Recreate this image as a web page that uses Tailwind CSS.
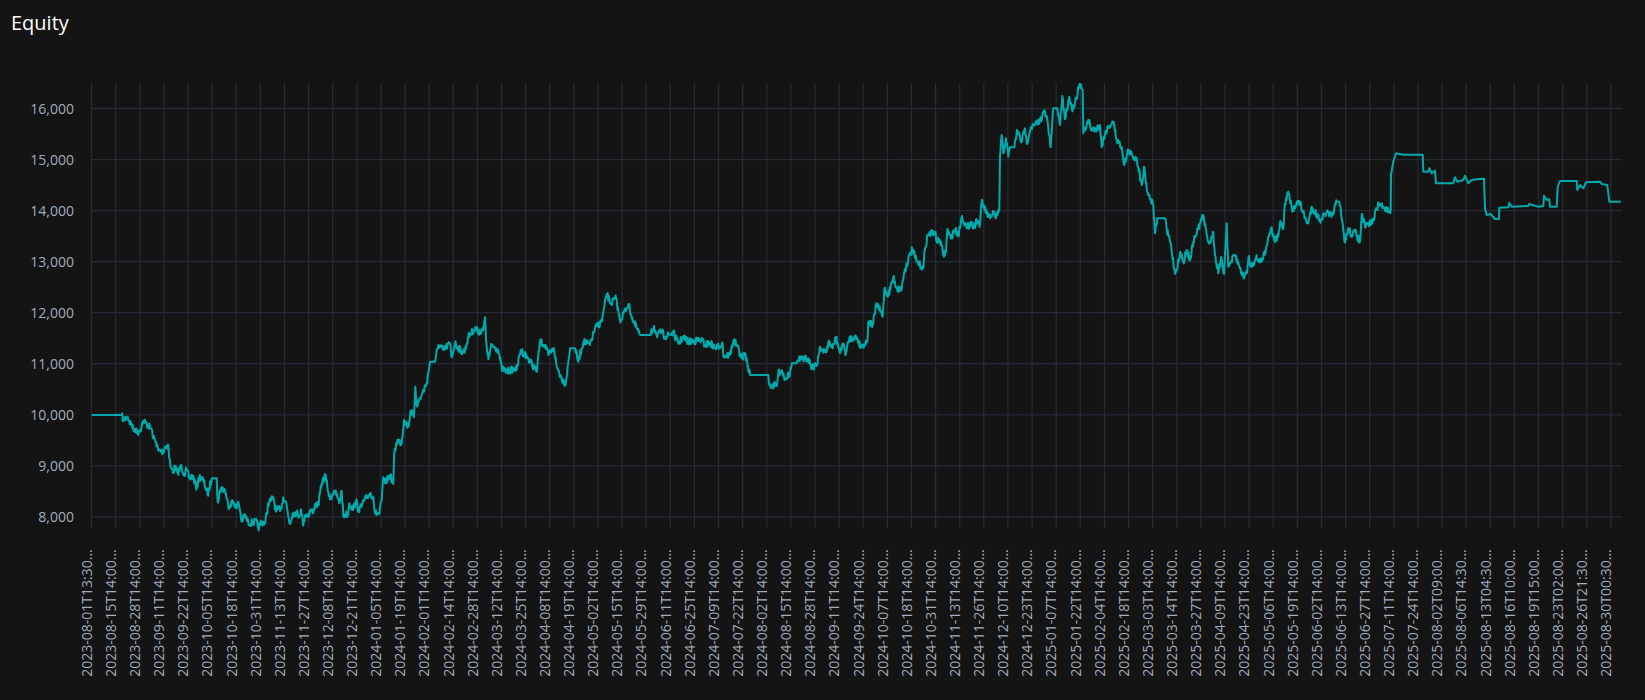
<!DOCTYPE html>
<html lang="en">
<head>
  <meta charset="UTF-8" />
  <title>Equity</title>
  <script src="https://cdn.jsdelivr.net/npm/@tailwindcss/browser@4"></script>
</head>
<body class="bg-[#141414] h-[700px] overflow-hidden font-['Open_Sans',sans-serif]">
  <h1 class="pt-[9px] pl-[11px] text-xl leading-7 font-normal text-white">Equity</h1>
  <svg class="block w-[1645px] h-[663px] text-[14px]" viewBox="0 37 1645 663">
    <g id="grid" class="stroke-[#262936]" stroke-width="1.3"></g>
    <g id="ylabels" class="fill-[#a2adbd]" text-anchor="end"></g>
    <g id="xlabels" class="fill-[#a2adbd]"></g>
    <path id="line" class="stroke-[#00aaaa]" fill="none" stroke-width="2" stroke-linejoin="round"></path>
  </svg>

  <script>
    const NS = 'http://www.w3.org/2000/svg';
    const ticks = ['2023-08-01T13:30','2023-08-15T14:00','2023-08-28T14:00','2023-09-11T14:00','2023-09-22T14:00','2023-10-05T14:00','2023-10-18T14:00','2023-10-31T14:00','2023-11-13T14:00','2023-11-27T14:00','2023-12-08T14:00','2023-12-21T14:00',
      '2024-01-05T14:00','2024-01-19T14:00','2024-02-01T14:00','2024-02-14T14:00','2024-02-28T14:00','2024-03-12T14:00','2024-03-25T14:00','2024-04-08T14:00','2024-04-19T14:00','2024-05-02T14:00','2024-05-15T14:00','2024-05-29T14:00','2024-06-11T14:00','2024-06-25T14:00','2024-07-09T14:00','2024-07-22T14:00','2024-08-02T14:00','2024-08-15T14:00','2024-08-28T14:00','2024-09-11T14:00','2024-09-24T14:00','2024-10-07T14:00','2024-10-18T14:00','2024-10-31T14:00','2024-11-13T14:00','2024-11-26T14:00','2024-12-10T14:00','2024-12-23T14:00',
      '2025-01-07T14:00','2025-01-22T14:00','2025-02-04T14:00','2025-02-18T14:00','2025-03-03T14:00','2025-03-14T14:00','2025-03-27T14:00','2025-04-09T14:00','2025-04-23T14:00','2025-05-06T14:00','2025-05-19T14:00','2025-06-02T14:00','2025-06-13T14:00','2025-06-27T14:00','2025-07-11T14:00','2025-07-24T14:00',
      '2025-08-02T09:00','2025-08-06T14:30','2025-08-13T04:30','2025-08-16T10:00','2025-08-19T15:00','2025-08-23T02:00','2025-08-26T21:30','2025-08-30T00:30'];
    const plotLeft = 91, plotRight = 1622, plotTop = 83, plotBottom = 528;

    function add(parent, tag, attrs, text) {
      const el = document.createElementNS(NS, tag);
      for (const k in attrs) el.setAttribute(k, attrs[k]);
      if (text) el.textContent = text;
      document.getElementById(parent).appendChild(el);
    }

    ticks.forEach((t, i) => {
      const x = 91.5 + i * 24.117;
      add('grid', 'line', { x1: x, x2: x, y1: plotTop, y2: plotBottom });
      add('xlabels', 'text', { transform: `translate(${x + 0.3},676.7) rotate(-90)` }, t + '...');
    });

    [16, 15, 14, 13, 12, 11, 10, 9, 8].forEach((v, i) => {
      const y = 108.5 + i * 51.05;
      add('grid', 'line', { x1: plotLeft, x2: plotRight, y1: y, y2: y });
      add('ylabels', 'text', { x: 74, y: y + 5 }, v + ',000');
    });

    // curve traced from the plot, a piece at a time: [originX, originY, x, y, x, y...] at 3x
    const pieces = [
      [90, 400, 5,45, 95,45, 100,60, 113,50, 118,65, 125,72, 130,90, 138,85, 140,100, 150,90, 155,78, 160,62, 170,72, 185,88, 190,115, 198,125, 205,152, 220,155, 225,140, 235,135, 238,175, 243,205, 250,215, 255,200, 262,218, 275,200, 282,222, 290,210, 298,235, 308,228, 320,265, 328,230, 340,240, 353,285, 365,235, 380,235, 383,305, 392,265, 405,270, 415,318, 430,305, 440,325, 445,305, 450,330],
      [0, 380, 725,425, 735,405, 745,430, 770,425, 775,445, 785,425, 795,430, 805,370, 820,352, 828,395],
      [280, 360, 5,440, 10,412, 18,425, 25,470, 30,492, 38,460, 50,458, 58,470, 63,448, 70,497, 75,465, 88,462, 92,448, 100,460, 105,432, 115,435, 125,370, 136,345, 142,380, 150,418, 162,392, 172,410, 178,430, 185,392, 190,468, 205,460, 208,430, 220,448, 228,422, 235,450, 245,440, 250,425, 270,400, 280,410, 285,460, 298,462, 305,420, 310,352, 315,370, 330,345, 340,372, 343,280, 352,240, 365,250, 372,180, 385,200, 392,152, 402,172, 406,80, 410,135, 425,105, 440,70, 450,5, 465,5],
      [400, 280, 115,195, 130,210, 150,190, 155,232, 165,190, 185,215, 195,212, 205,170, 225,145, 235,155, 250,150, 255,112, 258,180, 265,238, 275,195, 295,210, 305,265, 320,275, 345,265, 350,270, 362,210, 385,235, 410,275, 420,185, 435,195, 445,225, 462,205, 470,260, 485,295, 497,313, 510,205, 525,205, 535,245, 550,185, 570,195, 585,145, 605,125, 620,42, 632,70, 648,55, 660,122, 685,72, 700,125, 720,165, 752,165, 762,138, 770,165, 785,155, 795,170, 820,158, 835,190, 850,172, 865,185, 905,180, 915,195, 930,188, 945,205, 968,190, 970,228, 990,225, 1000,182, 1010,195, 1025,235, 1035,220, 1050,285, 1105,285],
      [760, 200, 28,555, 50,558, 55,520, 65,510, 75,535, 90,520, 95,490, 110,490, 115,480, 145,475, 155,500, 170,498, 180,440, 190,458, 203,445, 205,425, 218,445, 228,412, 240,460, 248,430, 258,460, 268,415, 290,412, 302,440, 322,425, 325,365, 338,375, 350,310, 368,350, 373,268, 385,285, 400,232, 412,268, 425,265, 432,220, 445,178, 457,148, 470,185, 490,205, 495,145, 503,105, 525,95, 530,125, 540,120, 550,165, 558,155, 562,88, 572,115, 585,88, 595,105, 606,48, 620,85, 635,65, 640,85, 650,60, 660,72],
      [940, 70, 125,395, 140,430, 150,445, 160,425, 168,445, 178,418, 180,260, 185,195, 190,250, 198,205, 205,260, 210,232, 222,232, 232,182, 245,215, 255,175, 260,220, 272,172, 285,165, 300,152, 312,125, 322,150, 332,232, 340,115, 352,115, 360,165, 367,78, 375,148, 388,80, 396,118, 410,85, 418,45, 428,60, 430,190, 445,150, 455,180, 470,175, 480,165, 485,232, 495,190, 505,170, 520,155, 530,210, 545,230, 553,285, 565,240, 578,260, 590,265, 605,345, 612,290, 622,365, 640,405, 645,490, 652,445, 675,445, 680,480, 692,520, 705,612, 722,550, 730,575, 740,540, 750,570, 760,515, 790,435, 800,495, 808,520, 820,490, 825,555, 835,610, 845,565, 852,612, 860,460, 865,590, 885,555, 900,595],
      [1130, 170, 340,320, 350,310, 357,258, 362,290, 378,265, 395,275, 408,235, 415,200, 425,172, 432,210, 445,200, 450,155, 460,175, 465,100, 475,65, 487,125, 500,95, 510,100, 525,145, 535,160, 545,110, 570,150, 590,128, 605,140, 620,95, 628,95, 640,180, 645,218, 655,175, 665,195, 675,185, 690,215, 695,135, 705,170],
      [1370, 130, 12,270, 18,235, 30,222, 40,230, 55,242, 62,240, 63,135, 70,95, 78,70, 100,74, 158,74, 160,125, 175,125, 178,115, 185,130, 195,122, 198,160, 205,160, 250,160, 255,142, 262,155, 280,150, 285,137, 295,160, 305,150, 320,148, 342,146, 345,235, 350,255, 362,252, 375,267, 387,267, 388,233, 415,232, 418,218, 425,230, 475,228, 478,222, 505,230, 520,228, 522,197, 530,210, 538,208, 540,230, 560,230, 563,170, 570,153, 620,153, 622,180, 630,165, 640,175, 648,157, 690,155, 695,162, 712,165, 718,215, 752,215]
    ];

    const pts = [];
    pieces.forEach(p => {
      for (let i = 2; i < p.length; i += 2) pts.push([p[0] + p[i] / 3, p[1] + p[i + 1] / 3]);
    });

    // small seeded wobble so the busy stretches look like daily data
    let seed = 7;
    const rnd = () => (seed = (seed * 16807) % 2147483647) / 2147483647 - 0.5;
    let d = `M${pts[0][0].toFixed(1)} ${pts[0][1].toFixed(1)}`;
    for (let i = 1; i < pts.length; i++) {
      const [x0, y0] = pts[i - 1], [x1, y1] = pts[i];
      const flat = Math.abs(y1 - y0) < 0.01;
      const steps = flat || x1 > 1391 ? 1 : Math.max(1, Math.round((x1 - x0) / 0.5));
      for (let s = 1; s <= steps; s++) {
        const t = s / steps;
        const wob = s < steps ? rnd() * 7 : 0;
        d += `L${(x0 + (x1 - x0) * t).toFixed(1)} ${(y0 + (y1 - y0) * t + wob).toFixed(1)}`;
      }
    }
    document.getElementById('line').setAttribute('d', d);
  </script>
</body>
</html>
